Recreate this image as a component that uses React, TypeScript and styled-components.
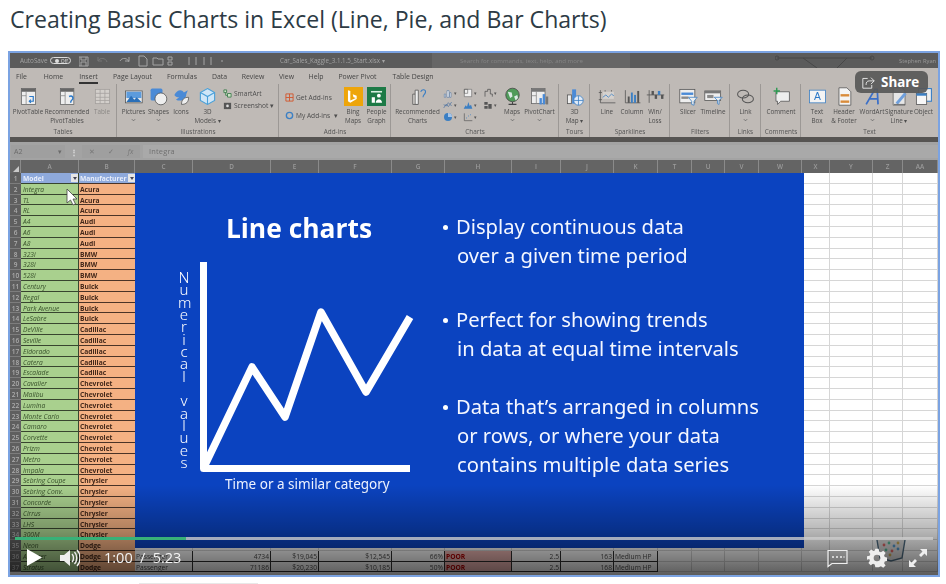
import React from "react";
import styled, { createGlobalStyle } from "styled-components";

const Global = createGlobalStyle`
  html, body { margin: 0; padding: 0; background: #fff; }
  body { font-family: "Open Sans", "Liberation Sans", sans-serif; width: 946px; height: 584px; overflow: hidden; }
`;

const Page = styled.div`
  width: 946px;
  height: 584px;
  padding-left: 8px;
  box-sizing: border-box;
`;
const Title = styled.h1`
  margin: 0;
  height: 51px;
  padding: 3px 0 0 2px;
  box-sizing: border-box;
  font: 400 23.08px/32px "Open Sans", sans-serif;
  color: #2d3b45;
`;
const Frame = styled.div`
  position: relative;
  width: 928px;
  height: 522px;
  border: 2px solid #7ba3e2;
  overflow: hidden;
  background: #fff;
`;
const Faint = styled.div`
  width: 119px;
  height: 1px;
  margin: 6px 0 0 131px;
  background: #e8e8e8;
`;
const Excel = styled.div`
  display: flex;
  flex-direction: column;
  width: 928px;
  height: 522px;
  filter: blur(0.45px);
  font-family: "Open Sans", sans-serif;
`;
const TitleBar = styled.div`
  position: relative;
  flex: none;
  height: 15px;
  background: #5b5b5b;
  display: flex;
  align-items: center;
  color: #a3a3a3;
  font-size: 7px;
  padding-left: 10px;
`;
const AutoSave = styled.span`
  width: 30px;
  flex: none;
  white-space: nowrap;
  font-size: 6.3px;
`;
const Toggle = styled.span`
  margin: 0 8px 0 0;
  width: 21px;
  height: 7px;
  flex: none;
  border: 1px solid #ddd;
  border-radius: 5px;
  display: flex;
  align-items: center;
  justify-content: flex-end;
  font-size: 5px;
  color: #ddd;
  padding-right: 2px;
  box-sizing: border-box;
  &::before { content: ""; width: 4px; height: 4px; border-radius: 50%; background: #ddd; margin-right: 2px; }
`;
const QuickIcons = styled.svg`
  flex: none;
  width: 146px;
  height: 12px;
`;
const DocName = styled.span`
  margin-left: 55px;
  width: 103px;
  flex: none;
  white-space: nowrap;
  font-size: 6.2px;
`;
const SearchBox = styled.span`
  margin-left: 49px;
  width: 198px;
  height: 15px;
  background: #666;
  color: #858585;
  font-size: 6.1px;
  display: flex;
  align-items: center;
  padding-left: 28px;
  box-sizing: border-box;
  flex: none;
  white-space: nowrap;
`;
const Circuit = styled.svg`
  margin-left: 145px;
  width: 100px;
  height: 15px;
  flex: none;
`;
const UserName = styled.span`
  margin-left: 24px;
  color: #9a9a9a;
  font-size: 5.8px;
  white-space: nowrap;
`;
const Tabs = styled.div`
  flex: none;
  height: 16px;
  display: flex;
  align-items: center;
  background: #bfbab6;
`;
const Tab = styled.span<{ $w: number; $active?: boolean }>`
  width: ${(p) => p.$w}px;
  flex: none;
  font-size: 6.9px;
  color: #444;
  text-align: center;
  position: relative;
  line-height: 15px;
  white-space: nowrap;
  ${(p) =>
    p.$active &&
    `&::after { content: ""; position: absolute; left: 5px; right: 5px; bottom: 0; height: 1.5px; background: #333; }`}
`;
const Ribbon = styled.div`
  flex: none;
  height: 53px;
  display: flex;
  background: #bfbab6;
`;
const Group = styled.div<{ $w: number; $line?: boolean }>`
  width: ${(p) => p.$w}px;
  flex: none;
  box-sizing: border-box;
  display: flex;
  flex-direction: column;
  align-items: stretch;
  position: relative;
  margin-right: 1px;
  border-right: ${(p) => (p.$line === false ? "0" : "1px solid #9c9895")};
`;
const GroupBody = styled.div`
  flex: 1;
  display: flex;
`;
const GroupName = styled.div`
  flex: none;
  height: 10px;
  text-align: center;
  font-size: 6.4px;
  line-height: 10px;
  color: #555;
  white-space: nowrap;
`;
const Item = styled.div<{ $w: number }>`
  width: ${(p) => p.$w}px;
  flex: none;
  display: flex;
  flex-direction: column;
  align-items: center;
  padding-top: 3px;
  box-sizing: border-box;
  color: #4d4d4d;
`;
const ItemIcon = styled.svg`
  width: 19px;
  height: 19px;
  flex: none;
  margin-bottom: 1px;
`;
const ItemLabel = styled.div`
  font-size: 6.3px;
  line-height: 9px;
  text-align: center;
  white-space: nowrap;
`;
const Muted = styled(ItemLabel)`
  color: #8b8885;
`;
const Stack = styled.div<{ $w: number; $gap: number; $pad: number; $left: number }>`
  width: ${(p) => p.$w}px;
  flex: none;
  display: flex;
  flex-direction: column;
  gap: ${(p) => p.$gap}px;
  padding: ${(p) => p.$pad}px 0 0 ${(p) => p.$left}px;
  box-sizing: border-box;
`;
const StackRow = styled.div`
  display: flex;
  align-items: center;
  gap: 2px;
  font-size: 6.6px;
  line-height: 9px;
  color: #4d4d4d;
  white-space: nowrap;
`;
const MiniIcon = styled.svg`
  width: 9px;
  height: 9px;
  flex: none;
`;
const ChartGrid = styled.div`
  width: 60px;
  flex: none;
  display: grid;
  grid-template-columns: repeat(3, 20px);
  grid-auto-rows: 12px;
  padding-top: 3px;
  box-sizing: border-box;
`;
const ChartCell = styled.div`
  display: flex;
  align-items: center;
  gap: 1px;
  color: #555;
  font-size: 5px;
`;
const ChartIcon = styled.svg`
  width: 10px;
  height: 10px;
  flex: none;
`;
const Strip = styled.div`
  flex: none;
  height: 5px;
  background: #565452;
`;
const FormulaBar = styled.div`
  flex: none;
  height: 18px;
  background: #a3a3a3;
  display: flex;
  align-items: center;
  color: #707070;
  font-size: 7.4px;
`;
const NameBox = styled.div`
  width: 54px;
  height: 13px;
  margin-left: 1px;
  background: #9f9f9f;
  color: #6b6b6b;
  display: flex;
  justify-content: space-between;
  align-items: center;
  padding: 0 3px;
  box-sizing: border-box;
  font-size: 7px;
`;
const Dots = styled.span`
  width: 17px;
  flex: none;
  text-align: center;
  color: #e0e0e0;
  font-size: 8px;
  font-weight: 700;
`;
const FormulaTools = styled.div`
  width: 58px;
  height: 13px;
  background: #9f9f9f;
  color: #777;
  display: flex;
  justify-content: space-around;
  align-items: center;
  font-size: 7px;
`;
const FormulaInput = styled.div`
  flex: 1;
  height: 13px;
  margin-left: 3px;
  background: #a9a9a9;
  padding-left: 6px;
  line-height: 13px;
  letter-spacing: 0.2px;
`;
const HeaderRow = styled.div`
  flex: none;
  height: 13px;
  display: grid;
  grid-template-columns: var(--cols);
  background: #646464;
  color: #9b9b9b;
  font-size: 6.4px;
`;
const HeaderCell = styled.div`
  display: flex;
  align-items: center;
  justify-content: center;
  border-right: 1px solid #8a8a8a;
  box-sizing: border-box;
  font-weight: 600;
`;
const Corner = styled(HeaderCell)`
  justify-content: flex-end;
  align-items: flex-end;
  &::after {
    content: "";
    border-style: solid;
    border-width: 0 0 6px 6px;
    border-color: transparent transparent #c9c9c9 transparent;
    margin: 0 1px 1px 0;
  }
`;
const Sheet = styled.div`
  flex: 1;
  overflow: hidden;
  background: #fff;
`;
const Row = styled.div`
  display: grid;
  grid-template-columns: var(--cols);
  height: 10.8px;
  font-size: 6.7px;
  line-height: 11.5px;
`;
const RowNum = styled.div`
  background: #5f5f5f;
  color: #adadad;
  font-size: 6.5px;
  font-weight: 600;
  text-align: center;
  border-bottom: 0.5px solid #7d7d7d;
  overflow: hidden;
`;
const ModelCell = styled.div<{ $head?: boolean }>`
  background: ${(p) => (p.$head ? "#8ea9db" : "#a9d08e")};
  color: ${(p) => (p.$head ? "#e8eefb" : "#37502a")};
  font-style: ${(p) => (p.$head ? "normal" : "italic")};
  font-weight: ${(p) => (p.$head ? 700 : 400)};
  border-bottom: 1px solid #38452f;
  border-right: 1px solid #38452f;
  padding-left: 2px;
  box-sizing: border-box;
  position: relative;
  white-space: nowrap;
  overflow: hidden;
`;
const MakerCell = styled.div<{ $head?: boolean }>`
  background: ${(p) => (p.$head ? "#8ea9db" : "#f4b183")};
  color: ${(p) => (p.$head ? "#e8eefb" : "#43281a")};
  font-weight: 700;
  border-bottom: 1px solid #4a3327;
  padding-left: 1px;
  box-sizing: border-box;
  position: relative;
  white-space: nowrap;
  overflow: hidden;
`;
const FilterBtn = styled.span`
  position: absolute;
  right: 0;
  top: 1px;
  width: 7px;
  height: 8px;
  background: #e6e6e6;
  &::after {
    content: "";
    position: absolute;
    left: 1.5px;
    top: 3px;
    border-style: solid;
    border-width: 3px 2px 0;
    border-color: #445 transparent transparent;
  }
`;
const DataCell = styled.div<{ $align?: string; $poor?: boolean }>`
  background: ${(p) => (p.$poor ? "#eeb7b4" : "#fff")};
  color: ${(p) => (p.$poor ? "#b00000" : "#4d4d4d")};
  font-weight: ${(p) => (p.$poor ? 700 : 400)};
  text-align: ${(p) => p.$align || "left"};
  border-bottom: 1px solid #2f2f2f;
  border-right: 1px solid #2f2f2f;
  padding: 0 1px;
  box-sizing: border-box;
  white-space: nowrap;
  overflow: hidden;
`;
const EmptyCell = styled.div`
  border-bottom: 1px solid #d6d6d6;
  border-right: 1px solid #d6d6d6;
  box-sizing: border-box;
`;

/* Slide over the sheet */
const Slide = styled.div`
  position: absolute;
  left: 125px;
  top: 120px;
  width: 669px;
  height: 375px;
  background: #0b43c0;
  display: flex;
  color: #fff;
  font-family: "Noto Sans", "Open Sans", sans-serif;
  filter: blur(0.3px);
`;
const SlideLeft = styled.div`
  width: 295px;
  flex: none;
  display: flex;
  flex-direction: column;
`;
const SlideHeading = styled.div`
  margin-top: 36px;
  height: 38px;
  padding-left: 33px;
  text-align: center;
  font-size: 26.4px;
  line-height: 38px;
  font-weight: 700;
  white-space: nowrap;
  font-family: "Open Sans", sans-serif;
`;
const ChartWrap = styled.div`
  display: flex;
  margin-top: 15px;
  padding-left: 43px;
`;
const AxisY = styled.div`
  width: 12px;
  flex: none;
  padding-top: 9px;
  text-align: center;
  font-size: 15px;
  line-height: 12.33px;
  font-family: "Noto Sans", sans-serif;
  font-weight: 300;
  white-space: pre;
`;
const ChartSvg = styled.svg`
  width: 230px;
  height: 218px;
  margin-left: 4px;
  flex: none;
`;
const AxisX = styled.div`
  margin: -6px 0 0 90px;
  font-size: 13.5px;
  line-height: 20px;
  white-space: nowrap;
  color: #eef3ff;
`;
const Bullets = styled.div`
  flex: 1;
  padding: 39px 0 0 13px;
`;
const Bullet = styled.div<{ $gap: number }>`
  display: flex;
  margin-bottom: ${(p) => p.$gap}px;
  font-size: 20.2px;
  line-height: 29px;
  color: #f4f7ff;
`;
const Dot = styled.span`
  width: 5px;
  height: 5px;
  margin: 13px 8px 0 0;
  background: #fff;
  border-radius: 50%;
  flex: none;
`;
const BulletLines = styled.div`
  white-space: pre;
`;
const Cont = styled.div`
  padding-left: 1px;
`;

const BottomShade = styled.div`
  position: absolute;
  left: 0;
  right: 0;
  bottom: 0;
  height: 90px;
  background: linear-gradient(to bottom, rgba(0, 0, 0, 0) 0%, rgba(0, 0, 0, 0.28) 50%, rgba(0, 0, 0, 0.64) 100%);
`;
const Watermark = styled.svg`
  position: absolute;
  left: 865px;
  top: 487px;
  width: 32px;
  height: 22px;
`;
const Controls = styled.div`
  position: absolute;
  left: 5px;
  right: 5px;
  bottom: 0;
  height: 41px;
  display: flex;
  flex-direction: column;
  filter: blur(0.25px);
`;
const Track = styled.div`
  margin-top: 3px;
  height: 3px;
  flex: none;
  background: rgba(205, 205, 205, 0.8);
`;
const Fill = styled.div`
  height: 100%;
  background: #38b178;
`;
const ControlRow = styled.div`
  flex: 1;
  display: flex;
  align-items: center;
  color: #fff;
  padding-left: 12px;
`;
const PlayIcon = styled.svg`
  width: 15px;
  height: 17px;
  flex: none;
  margin-right: 18px;
`;
const VolumeIcon = styled.svg`
  width: 20px;
  height: 20px;
  flex: none;
  margin-right: 24px;
`;
const Time = styled.span`
  font: 400 14.5px/20px "Open Sans", sans-serif;
  color: #f2f2f2;
  white-space: pre;
  word-spacing: 3.6px;
`;
const Spacer = styled.div`
  flex: 1;
`;
const EndGap = styled.div`
  flex: 0 0 5px;
`;
const CtlIcon = styled.svg<{ $gap: number; $w: number }>`
  width: ${(p) => p.$w}px;
  height: ${(p) => p.$w}px;
  flex: none;
  margin-left: ${(p) => p.$gap}px;
`;
const Share = styled.div`
  position: absolute;
  left: 845px;
  top: 18px;
  width: 73px;
  height: 22px;
  background: rgba(88, 88, 88, 0.92);
  border-radius: 6px;
  display: flex;
  align-items: center;
  gap: 6px;
  padding-left: 7px;
  box-sizing: border-box;
  color: #fff;
  font: 700 13.4px/22px "Open Sans", sans-serif;
`;
const ShareIcon = styled.svg`
  width: 13px;
  height: 13px;
  flex: none;
`;
const Cursor = styled.svg`
  position: absolute;
  left: 56px;
  top: 135px;
  width: 12px;
  height: 18px;
`;

const COLS =
  "11px 58px 56px 58px 78px 48px 73px 53px 67px 49px 53px 44px 34px 33px 34px 43px 28px 43px 30px 35px";
const letters = ["A", "B", "C", "D", "E", "F", "G", "H", "I", "J", "K", "T", "U", "V", "W", "X", "Y", "Z", "AA"];

const cars: [string, string][] = [
  ["Integra", "Acura"], ["TL", "Acura"], ["RL", "Acura"], ["A4", "Audi"], ["A6", "Audi"], ["A8", "Audi"],
  ["323i", "BMW"], ["328i", "BMW"], ["528i", "BMW"], ["Century", "Buick"], ["Regal", "Buick"],
  ["Park Avenue", "Buick"], ["LeSabre", "Buick"], ["DeVille", "Cadillac"], ["Seville", "Cadillac"],
  ["Eldorado", "Cadillac"], ["Catera", "Cadillac"], ["Escalade", "Cadillac"], ["Cavalier", "Chevrolet"],
  ["Malibu", "Chevrolet"], ["Lumina", "Chevrolet"], ["Monte Carlo", "Chevrolet"], ["Camaro", "Chevrolet"],
  ["Corvette", "Chevrolet"], ["Prizm", "Chevrolet"], ["Metro", "Chevrolet"], ["Impala", "Chevrolet"],
  ["Sebring Coupe", "Chrysler"], ["Sebring Conv.", "Chrysler"], ["Concorde", "Chrysler"], ["Cirrus", "Chrysler"],
  ["LHS", "Chrysler"], ["300M", "Chrysler"], ["Neon", "Dodge"], ["Avenger", "Dodge"], ["Stratus", "Dodge"],
];
const extra: Record<number, string[]> = {
  36: ["Passenger", "4734", "$19,045", "$12,545", "66%", "POOR", "2.5", "163", "Medium HP"],
  37: ["Passenger", "71186", "$20,230", "$10,185", "50%", "POOR", "2.5", "168", "Medium HP"],
};
const aligns = ["left", "right", "right", "right", "right", "left", "right", "right", "left"];

const icons: Record<string, React.ReactNode> = {
  pivot: (<><rect x="3" y="2" width="18" height="20" fill="#eee" stroke="#666" /><rect x="3" y="2" width="18" height="4" fill="#666" /><path d="M9 6v16M3 11h6" stroke="#888" /><path d="M13 12h5v6h-5m2-2-2 2 2 2" fill="none" stroke="#2a78c8" strokeWidth="1.5" /></>),
  rec: (<><rect x="3" y="2" width="17" height="20" fill="#eee" stroke="#666" /><rect x="3" y="2" width="17" height="4" fill="#666" /><path d="M9 6v16M3 11h6" stroke="#888" /><path d="M14 12c4-2 7 2 3 5-1 1-1 2-1 3" fill="none" stroke="#2a78c8" strokeWidth="1.8" /></>),
  table: (<><rect x="3" y="3" width="18" height="18" fill="#d3cfcb" stroke="#a5a19e" /><path d="M3 8h18M3 13h18M3 17h18M9 3v18M15 3v18" stroke="#a5a19e" /></>),
  pictures: (<><rect x="2" y="5" width="21" height="15" fill="#eee" stroke="#555" /><path d="M3 6h19v8H3z" fill="#5c9bdc" /><path d="M3 19l6-8 4 5 3-3 6 6z" fill="#2a6fb8" /></>),
  shapes: (<><rect x="2" y="2" width="15" height="15" rx="2" fill="#4a8ad6" /><circle cx="15" cy="15" r="7.5" fill="#eee" stroke="#555" /></>),
  birds: (<><path d="M3 10c3-6 9-8 12-3l5-3-2 5c0 7-7 10-13 7l4-3c-3 0-5-1-6-3z" fill="#4a8ad6" /><path d="M12 22c0-6 3-9 9-9 0 6-3 9-9 9z" fill="#eee" stroke="#555" /></>),
  cube: (<><path d="M12 2l9 5v10l-9 5-9-5V7z" fill="#cfe6f7" stroke="#4aa0d8" strokeWidth="1.4" /><path d="M3 7l9 5 9-5M12 12v10" fill="none" stroke="#4aa0d8" strokeWidth="1.4" /></>),
  bing: (<><rect width="24" height="24" fill="#eea50a" /><path d="M8 5v12l7-3-3-1-1-4 5 2v4l-8 5-3-2V4z" fill="#fff" /></>),
  people: (<><rect width="24" height="24" fill="#1d7a46" /><path d="M5 5h14v2H5z" fill="#d8efe0" /><circle cx="15" cy="11" r="2.4" fill="#fff" /><path d="M11 20c0-6 8-6 8 0zM6 13h4v7H6z" fill="#fff" /></>),
  recChart: (<><path d="M6 9h6v13H6z" fill="#d9d5d1" stroke="#555" /><path d="M9 4h4v18H9z" fill="#eee" stroke="#555" /><path d="M16 6c2-4 7-3 6 1-1 3-3 3-3 6" fill="none" stroke="#3b7fc4" strokeWidth="1.4" /></>),
  globe: (<><circle cx="12" cy="10" r="8.5" fill="#4f9b5a" stroke="#444" /><path d="M6 6l5 1 1 5-3 2zM14 12l4-2 1 4-3 3z" fill="#dbe9e5" /><path d="M12 19v3M7 22h10" stroke="#444" strokeWidth="1.4" /></>),
  pivotChart: (<><rect x="2" y="2" width="17" height="19" fill="#eee" stroke="#666" /><rect x="2" y="2" width="17" height="4" fill="#777" /><path d="M8 6v15M2 11h6" stroke="#888" /><rect x="12" y="14" width="3" height="8" fill="#4a8ad6" /><rect x="16" y="9" width="3" height="13" fill="#4a8ad6" /><rect x="20" y="12" width="3" height="10" fill="#777" /></>),
  map3d: (<><rect x="3" y="10" width="5" height="11" fill="#eee" stroke="#555" /><rect x="9" y="3" width="5" height="18" fill="#4a8ad6" /><circle cx="17" cy="17" r="6" fill="#dfeaf7" stroke="#3b7fc4" /><path d="M11 17h12M17 11v12" stroke="#3b7fc4" /></>),
  spLine: (<><path d="M3 4v16h19M1 7h4M1 16h4M9 4v2M17 4v2" fill="none" stroke="#555" /><rect x="6" y="6" width="14" height="9" fill="#d5d1cd" /><path d="M6 13l4-3 3 3 4-4 3 2" fill="none" stroke="#3b7fc4" /></>),
  spCol: (<><path d="M3 4v16h19" fill="none" stroke="#555" /><rect x="6" y="12" width="2.4" height="8" fill="#555" /><rect x="10" y="7" width="2.4" height="13" fill="#3b7fc4" /><rect x="14" y="10" width="2.4" height="10" fill="#3b7fc4" /><rect x="18" y="5" width="2.4" height="15" fill="#555" /></>),
  spWin: (<><path d="M4 4v16M1 10h22" fill="none" stroke="#555" /><rect x="7" y="5" width="3" height="5" fill="#555" /><rect x="11" y="10" width="3" height="5" fill="#555" /><rect x="15" y="5" width="3" height="5" fill="#3b7fc4" /><rect x="19" y="10" width="3" height="5" fill="#555" /></>),
  slicer: (<><rect x="1" y="3" width="19" height="17" fill="#eee" stroke="#555" /><rect x="3" y="7" width="15" height="3" fill="#4a8ad6" /><rect x="3" y="12" width="9" height="3" fill="#8a8a8a" /><path d="M12 13h11l-4 5v5l-3-1v-4z" fill="#eee" stroke="#3b7fc4" /></>),
  timeline: (<><rect x="1" y="5" width="20" height="12" fill="#eee" stroke="#555" /><rect x="1" y="5" width="20" height="3" fill="#777" /><rect x="4" y="10" width="8" height="4" fill="#8a8a8a" /><path d="M13 13h10l-4 4v5l-2-1v-4z" fill="#eee" stroke="#3b7fc4" /></>),
  link: (<><ellipse cx="9" cy="9" rx="7" ry="5" fill="none" stroke="#555" strokeWidth="1.3" /><ellipse cx="15" cy="15" rx="7" ry="5" fill="none" stroke="#555" strokeWidth="1.3" /></>),
  comment: (<><path d="M5 6h17v12H11l-4 4v-4H5z" fill="#eee" stroke="#555" /><path d="M6 1v8M2 5h8" stroke="#2e9a52" strokeWidth="1.8" /></>),
  textBox: (<><rect x="2" y="4" width="20" height="16" fill="#f4f4f4" stroke="#3b7fc4" /><text x="12" y="17" fontSize="13" textAnchor="middle" fill="#2a78c8" fontFamily="Liberation Sans">A</text></>),
  header: (<><path d="M5 1h10l5 5v17H5z" fill="#f4f4f4" stroke="#555" /><rect x="7" y="9" width="11" height="3" fill="#d98b3a" /><rect x="7" y="17" width="11" height="3" fill="#d98b3a" /></>),
  wordArt: (<path d="M4 22L15 3h3l1 19M8 15h10" fill="none" stroke="#3b6fc8" strokeWidth="2.2" />),
  signature: (<><path d="M4 1h11l4 4v18H4z" fill="#e6e6e6" stroke="#666" /><path d="M7 20l11-13 3 2-11 13z" fill="#6f9fdc" /><path d="M5 22h14" stroke="#555" /></>),
  object: (<><rect x="6" y="2" width="16" height="16" fill="#eee" stroke="#3b7fc4" strokeWidth="1.4" /><rect x="3" y="8" width="13" height="14" fill="#f7f7f7" stroke="#555" /><rect x="3" y="8" width="13" height="3" fill="#3b7fc4" /></>),
  none: null,
};

const chartCells: React.ReactNode[] = [
  <path d="M2 9h2v5H2zM6 4h3v10H6zM10 7h2v7h-2z" fill="#eee" stroke="#4a6fa0" strokeWidth=".8" />,
  <path d="M2 2h11v11H2zM2 2h5v6H2z" fill="#eee" stroke="#555" strokeWidth=".8" />,
  <path d="M3 13V5h4V2h4v7h3v4" fill="none" stroke="#555" strokeWidth="1.2" />,
  <path d="M1 12l4-6 3 4 5-7M1 7l4 2 3-5 5 5" fill="none" stroke="#4a6fa0" strokeWidth="1" />,
  <path d="M1 13l3-5 2 2 2-7 2 6 2-2 2 6z" fill="#3b7fc4" />,
  <path d="M2 3h5v4H2zM8 6h5v7H8zM2 9h5v4H2z" fill="#555" />,
  <><circle cx="7.5" cy="7.5" r="6" fill="#3b7fc4" /><path d="M7.5 7.5V1.5a6 6 0 0 1 6 6z" fill="#a8c6e8" /></>,
  <><path d="M2 2v11h12" fill="none" stroke="#555" /><path d="M5 9h1M8 6h1M11 4h1" stroke="#3b7fc4" strokeWidth="1.6" /></>,
];

const Caret = styled.svg`
  width: 5px;
  height: 4px;
  display: block;
  margin: 2px auto 0;
`;
const Chevron = () => (
  <Caret viewBox="0 0 6 4"><path d="M1 1l2 2 2-2" fill="none" stroke="#666" /></Caret>
);

const Btn = ({ w, icon, lines, caret, muted }: { w: number; icon: string; lines: string[]; caret?: boolean; muted?: boolean }) => {
  const L = muted ? Muted : ItemLabel;
  return (
    <Item $w={w}>
      <ItemIcon viewBox="0 0 24 24">{icons[icon]}</ItemIcon>
      {lines.map((l) => (
        <L key={l}>{l}</L>
      ))}
      {caret && <Chevron />}
    </Item>
  );
};

export default function App() {
  return (
    <Page>
      <Global />
      <Title>Creating Basic Charts in Excel (Line, Pie, and Bar Charts)</Title>
      <Frame style={{ ["--cols" as string]: COLS }}>
        <Excel>
          <TitleBar>
            <AutoSave>AutoSave</AutoSave>
            <Toggle>Off</Toggle>
            <QuickIcons viewBox="0 0 146 12">
              <g fill="none" stroke="#a5a5a5" strokeWidth="1">
                <path d="M0 2h9v9H0zM2 2v3h5V2M2 11V7h5v4" />
                <path d="M19 6c2-4 8-3 9 1M19 2v4h4" stroke="#777" />
                <path d="M50 7c-1-4-7-5-9-1M50 2v4h-4" />
                <path d="M60 1h5l3 3v7h-8z" />
                <path d="M74 3h4l1 1h5v6H74z" />
                <path d="M89 2h4v3h-4zM89 7h4v3h-4z" />
                <path d="M110 2v8M117 2v8M125 2v8M132 2v8M143 5v2" />
              </g>
            </QuickIcons>
            <DocName>Car_Sales_Kaggle_3.1.1.5_Start.xlsx ▾</DocName>
            <SearchBox>Search for commands, text, help, and more</SearchBox>
            <Circuit viewBox="0 0 100 15">
              <path d="M2 5h95M28 5l14 10M72 5l-10 10" fill="none" stroke="#474747" strokeWidth="1" />
              <circle cx="2" cy="5" r="2" fill="none" stroke="#474747" />
              <circle cx="97" cy="5" r="2" fill="none" stroke="#474747" />
            </Circuit>
            <UserName>Stephen Ryan</UserName>
          </TitleBar>
          <Tabs>
            <Tab $w={23}>File</Tab>
            <Tab $w={41}>Home</Tab>
            <Tab $w={29} $active>Insert</Tab>
            <Tab $w={59}>Page Layout</Tab>
            <Tab $w={40}>Formulas</Tab>
            <Tab $w={35}>Data</Tab>
            <Tab $w={32}>Review</Tab>
            <Tab $w={35}>View</Tab>
            <Tab $w={24}>Help</Tab>
            <Tab $w={59}>Power Pivot</Tab>
            <Tab $w={52}>Table Design</Tab>
          </Tabs>
          <Ribbon>
            <Group $w={107}>
              <GroupBody>
                <Btn w={36} icon="pivot" lines={["PivotTable"]} />
                <Btn w={42} icon="rec" lines={["Recommended", "PivotTables"]} />
                <Btn w={28} icon="table" lines={["Table"]} muted />
              </GroupBody>
              <GroupName>Tables</GroupName>
            </Group>
            <Group $w={161}>
              <GroupBody>
                <Btn w={31} icon="pictures" lines={["Pictures"]} caret />
                <Btn w={19} icon="shapes" lines={["Shapes"]} caret />
                <Btn w={26} icon="birds" lines={["Icons"]} />
                <Btn w={27} icon="cube" lines={["3D", "Models ▾"]} />
                <Stack $w={55} $gap={3} $pad={5} $left={2}>
                  <StackRow>
                    <MiniIcon viewBox="0 0 10 10"><path d="M1 1h3v3H1zM5 5h4v4H5zM3 4v3h2" fill="#cfe3c8" stroke="#3f7f4f" /></MiniIcon>
                    SmartArt
                  </StackRow>
                  <StackRow>
                    <MiniIcon viewBox="0 0 10 10"><rect x="1" y="2" width="8" height="7" fill="#555" /><circle cx="5" cy="5.5" r="1.5" fill="#ddd" /></MiniIcon>
                    Screenshot ▾
                  </StackRow>
                </Stack>
              </GroupBody>
              <GroupName>Illustrations</GroupName>
            </Group>
            <Group $w={111}>
              <GroupBody>
                <Stack $w={61} $gap={9} $pad={9} $left={5}>
                  <StackRow>
                    <MiniIcon viewBox="0 0 10 10"><path d="M1 1h8v8H1zM1 5h8M5 1v8" fill="none" stroke="#d2562c" /></MiniIcon>
                    Get Add-ins
                  </StackRow>
                  <StackRow>
                    <MiniIcon viewBox="0 0 10 10"><circle cx="5" cy="5" r="3.5" fill="none" stroke="#3b7fc4" strokeWidth="1.5" /></MiniIcon>
                    My Add-ins&nbsp;&nbsp;▾
                  </StackRow>
                </Stack>
                <Btn w={24} icon="bing" lines={["Bing", "Maps"]} />
                <Btn w={23} icon="people" lines={["People", "Graph"]} />
              </GroupBody>
              <GroupName>Add-ins</GroupName>
            </Group>
            <Group $w={167}>
              <GroupBody>
                <Btn w={51} icon="recChart" lines={["Recommended", "Charts"]} />
                <ChartGrid>
                  {chartCells.map((c, i) => (
                    <ChartCell key={i}>
                      <ChartIcon viewBox="0 0 15 15">{c}</ChartIcon>
                      <span>▾</span>
                    </ChartCell>
                  ))}
                </ChartGrid>
                <Btn w={18} icon="globe" lines={["Maps"]} caret />
                <Btn w={37} icon="pivotChart" lines={["PivotChart"]} caret />
              </GroupBody>
              <GroupName>Charts</GroupName>
            </Group>
            <Group $w={30}>
              <GroupBody>
                <Btn w={29} icon="map3d" lines={["3D", "Map ▾"]} />
              </GroupBody>
              <GroupName>Tours</GroupName>
            </Group>
            <Group $w={79}>
              <GroupBody>
                <Btn w={32} icon="spLine" lines={["Line"]} />
                <Btn w={18} icon="spCol" lines={["Column"]} />
                <Btn w={28} icon="spWin" lines={["Win/", "Loss"]} />
              </GroupBody>
              <GroupName>Sparklines</GroupName>
            </Group>
            <Group $w={59}>
              <GroupBody>
                <Btn w={34} icon="slicer" lines={["Slicer"]} />
                <Btn w={16} icon="timeline" lines={["Timeline"]} />
              </GroupBody>
              <GroupName>Filters</GroupName>
            </Group>
            <Group $w={30}>
              <GroupBody>
                <Btn w={29} icon="link" lines={["Link"]} caret />
              </GroupBody>
              <GroupName>Links</GroupName>
            </Group>
            <Group $w={39}>
              <GroupBody>
                <Btn w={38} icon="comment" lines={["Comment"]} />
              </GroupBody>
              <GroupName>Comments</GroupName>
            </Group>
            <Group $w={135} $line={false}>
              <GroupBody>
                <Btn w={30} icon="textBox" lines={["Text", "Box"]} />
                <Btn w={24} icon="header" lines={["Header", "& Footer"]} />
                <Btn w={32} icon="wordArt" lines={["WordArt"]} caret />
                <Btn w={22} icon="signature" lines={["Signature", "Line ▾"]} />
                <Btn w={27} icon="object" lines={["Object"]} />
              </GroupBody>
              <GroupName>Text</GroupName>
            </Group>
          </Ribbon>
          <Strip />
          <FormulaBar>
            <NameBox>A2<span>▾</span></NameBox>
            <Dots>⋮</Dots>
            <FormulaTools><span>✕</span><span>✓</span><i>fx</i></FormulaTools>
            <FormulaInput>Integra</FormulaInput>
          </FormulaBar>
          <HeaderRow>
            <Corner />
            {letters.map((l) => (
              <HeaderCell key={l}>{l}</HeaderCell>
            ))}
          </HeaderRow>
          <Sheet>
            <Row>
              <RowNum>1</RowNum>
              <ModelCell $head>Model<FilterBtn /></ModelCell>
              <MakerCell $head>Manufacturer<FilterBtn /></MakerCell>
              {letters.slice(2).map((l) => (
                <EmptyCell key={l} />
              ))}
            </Row>
            {cars.map(([model, maker], i) => {
              const n = i + 2;
              const data = extra[n];
              return (
                <Row key={n}>
                  <RowNum>{n}</RowNum>
                  <ModelCell>{model}</ModelCell>
                  <MakerCell>{maker}</MakerCell>
                  {letters.slice(2).map((l, j) =>
                    data && j < 9 ? (
                      <DataCell key={l} $align={aligns[j]} $poor={data[j] === "POOR"}>
                        {data[j]}
                      </DataCell>
                    ) : (
                      <EmptyCell key={l} />
                    )
                  )}
                </Row>
              );
            })}
          </Sheet>
        </Excel>

        <Watermark viewBox="0 0 32 22">
          <path d="M2 0l3 18 11 3 11-3 3-18" fill="#dcdcdc" stroke="#4d6b80" strokeWidth="1.4" />
          {[["#d66", 9, 5], ["#5b9", 14, 3], ["#59c", 19, 6], ["#ca5", 23, 3], ["#5b9", 11, 10], ["#d66", 17, 11], ["#59c", 23, 9], ["#ca5", 15, 15]].map(
            ([c, x, y], i) => (
              <circle key={i} cx={x as number} cy={y as number} r="1.4" fill={c as string} />
            )
          )}
        </Watermark>

        <Slide>
          <SlideLeft>
            <SlideHeading>Line charts</SlideHeading>
            <ChartWrap>
              <AxisY>{"N\nu\nm\ne\nr\ni\nc\na\nl\n \nv\na\nl\nu\ne\ns"}</AxisY>
              <ChartSvg viewBox="0 0 230 218">
                <path d="M9.500 0v206.500h206.500" fill="none" stroke="#fff" strokeWidth="7" strokeLinejoin="round" />
                <path d="M11 203L58 105l33 50 36-105 45 80 44-75" fill="none" stroke="#fff" strokeWidth="7.5" strokeLinejoin="round" />
              </ChartSvg>
            </ChartWrap>
            <AxisX>Time or a similar category</AxisX>
          </SlideLeft>
          <Bullets>
            <Bullet $gap={35}>
              <Dot />
              <BulletLines>
                <div>Display continuous data</div>
                <Cont>over a given time period</Cont>
              </BulletLines>
            </Bullet>
            <Bullet $gap={29}>
              <Dot />
              <BulletLines>
                <div>Perfect for showing trends</div>
                <Cont>in data at equal time intervals</Cont>
              </BulletLines>
            </Bullet>
            <Bullet $gap={0}>
              <Dot />
              <BulletLines>
                <div>Data that’s arranged in columns</div>
                <Cont>or rows, or where your data</Cont>
                <Cont>contains multiple data series</Cont>
              </BulletLines>
            </Bullet>
          </Bullets>
        </Slide>

        <BottomShade />
        <Cursor viewBox="0 0 12 18">
          <path d="M1 1v14l3.5-3 2.500 5 2.500-1-2.500-5H11z" fill="#fff" stroke="#444" strokeWidth=".8" />
        </Cursor>
        <Share>
          <ShareIcon viewBox="0 0 16 16">
            <path d="M11 2l4 4-4 4M15 6H9c-3 0-4 2-4 5M7 3H1v12h11V11" fill="none" stroke="#eee" strokeWidth="1.1" />
          </ShareIcon>
          Share
        </Share>
        <Controls>
          <Track>
            <Fill style={{ width: `${(171 / 918) * 100}%` }} />
          </Track>
          <ControlRow>
            <PlayIcon viewBox="0 0 15 17"><path d="M0 0l15 8.500L0 17z" fill="#fff" /></PlayIcon>
            <VolumeIcon viewBox="0 0 20 20">
              <path d="M0 7h4l6-5v16l-6-5H0z" fill="#eee" />
              <path d="M12 6c2 2 2 6 0 8M14.500 4c3 3 3 9 0 12M17 2c4 4 4 12 0 16" fill="none" stroke="#eee" strokeWidth="1.4" />
            </VolumeIcon>
            <Time>1:00 / 5:23</Time>
            <Spacer />
            <CtlIcon $w={21} $gap={0} viewBox="0 0 21 21">
              <path d="M1 3.500h19v13H5l-4 3z" fill="none" stroke="#eee" strokeWidth="1.2" />
              <path d="M5 10h2M9 10h2M13 10h2M16.500 10h1" stroke="#eee" strokeWidth="1.6" />
            </CtlIcon>
            <CtlIcon $w={20} $gap={19} viewBox="0 0 24 24">
              <path
                fill="#eee"
                fillRule="evenodd"
                d="M10 1h4l.7 3.2 2 .8 2.8-1.800 2.800 2.800-1.800 2.800.8 2 3.200.7v4l-3.200.7-.8 2 1.800 2.800-2.800 2.800-2.800-1.800-2 .8L14 23h-4l-.7-3.200-2-.8-2.800 1.800-2.800-2.800 1.800-2.800-.8-2L0 14v-4l3.200-.7.8-2L2.200 4.500 5 1.700l2.800 1.800 1.500-.6zM12 8a4 4 0 1 0 0 8 4 4 0 0 0 0-8z"
              />
            </CtlIcon>
            <CtlIcon $w={20} $gap={21} viewBox="0 0 20 20">
              <path d="M12 1h7v7l-2.500-2.500L13 9l-2-2 3.500-3.500zM8 19H1v-7l2.500 2.500L7 11l2 2-3.500 3.500z" fill="#eee" />
            </CtlIcon>
            <EndGap />
          </ControlRow>
        </Controls>
      </Frame>
      <Faint />
    </Page>
  );
}
